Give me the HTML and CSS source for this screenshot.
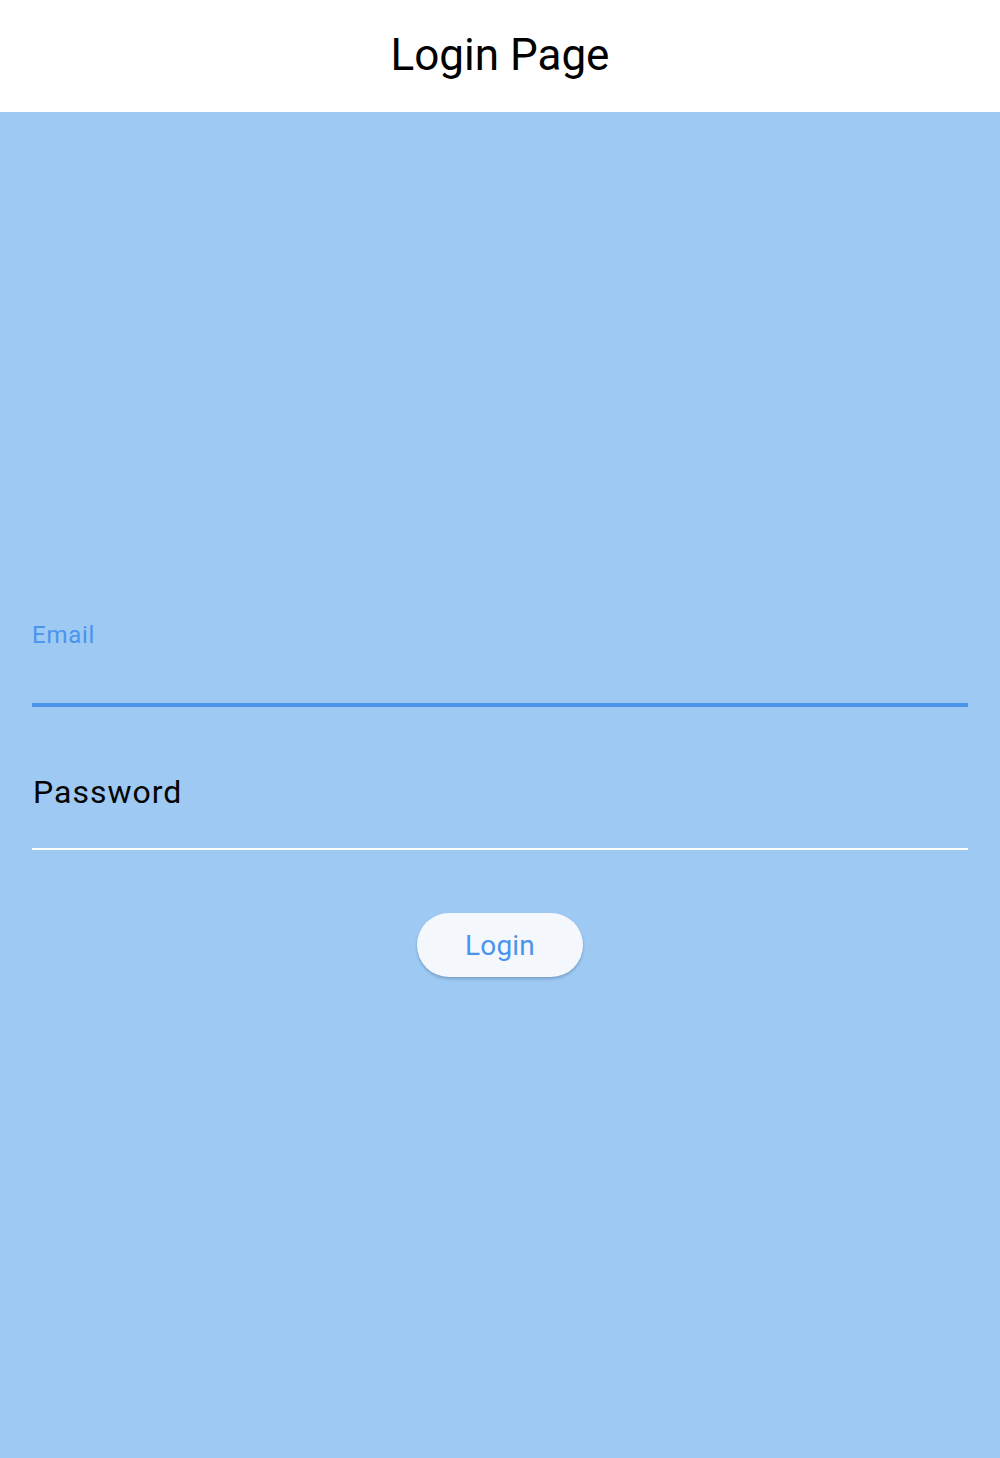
FILE: index.html
```html
<!DOCTYPE html>
<html>
<head>
<meta charset="utf-8">
<link rel="stylesheet" href="styles.css">
</head>
<body>
<header class="appbar"><h1 class="title">Login Page</h1></header>
<main class="content">
  <form class="form">
    <div class="field field-focused">
      <label class="label-float">Email</label>
    </div>
    <div class="field field-idle">
      <label class="label-rest">Password</label>
    </div>
    <div class="actions">
      <button type="button" class="btn">Login</button>
    </div>
  </form>
</main>
</body>
</html>
```
FILE: styles.css
```css
* { box-sizing: border-box; }
html, body { margin: 0; padding: 0; }
body {
  font-family: Roboto, "Liberation Sans", sans-serif;
  background: #9dc9f3;
  width: 1000px;
  height: 1458px;
  overflow: hidden;
}
.appbar {
  height: 112px;
  background: #ffffff;
  display: flex;
  align-items: center;
  justify-content: center;
  padding-bottom: 2px;
}
.title {
  margin: 0;
  font-weight: 400;
  font-size: 44px;
  line-height: 44px;
  color: #000;
}
.content {
  background: #9dc9f3;
  height: 1346px;
  padding: 511px 32px 0;
}
.form { display: flex; flex-direction: column; }
.field { display: flex; flex-direction: column; }
.field-focused {
  border-bottom: 4px solid #4a94ec;
}
.label-float {
  font-size: 24px;
  line-height: 24px;
  letter-spacing: 0.75px;
  color: #4a94ec;
  margin-bottom: 56px;
}
.field-idle {
  margin-top: 69px;
  border-bottom: 2px solid #ffffff;
}
.label-rest {
  font-size: 32px;
  line-height: 32px;
  letter-spacing: 1px;
  color: #050505;
  margin-bottom: 40px;
  padding-left: 1px;
}
.actions {
  display: flex;
  justify-content: center;
  margin-top: 63px;
}
.btn {
  height: 64px;
  padding: 0 48px;
  border: none;
  border-radius: 32px;
  background: #f4f8fd;
  color: #4a94ec;
  font-family: Roboto, "Liberation Sans", sans-serif;
  font-size: 28px;
  letter-spacing: 0.2px;
  box-shadow: 0 2px 3px rgba(40, 70, 110, 0.3);
}
```
